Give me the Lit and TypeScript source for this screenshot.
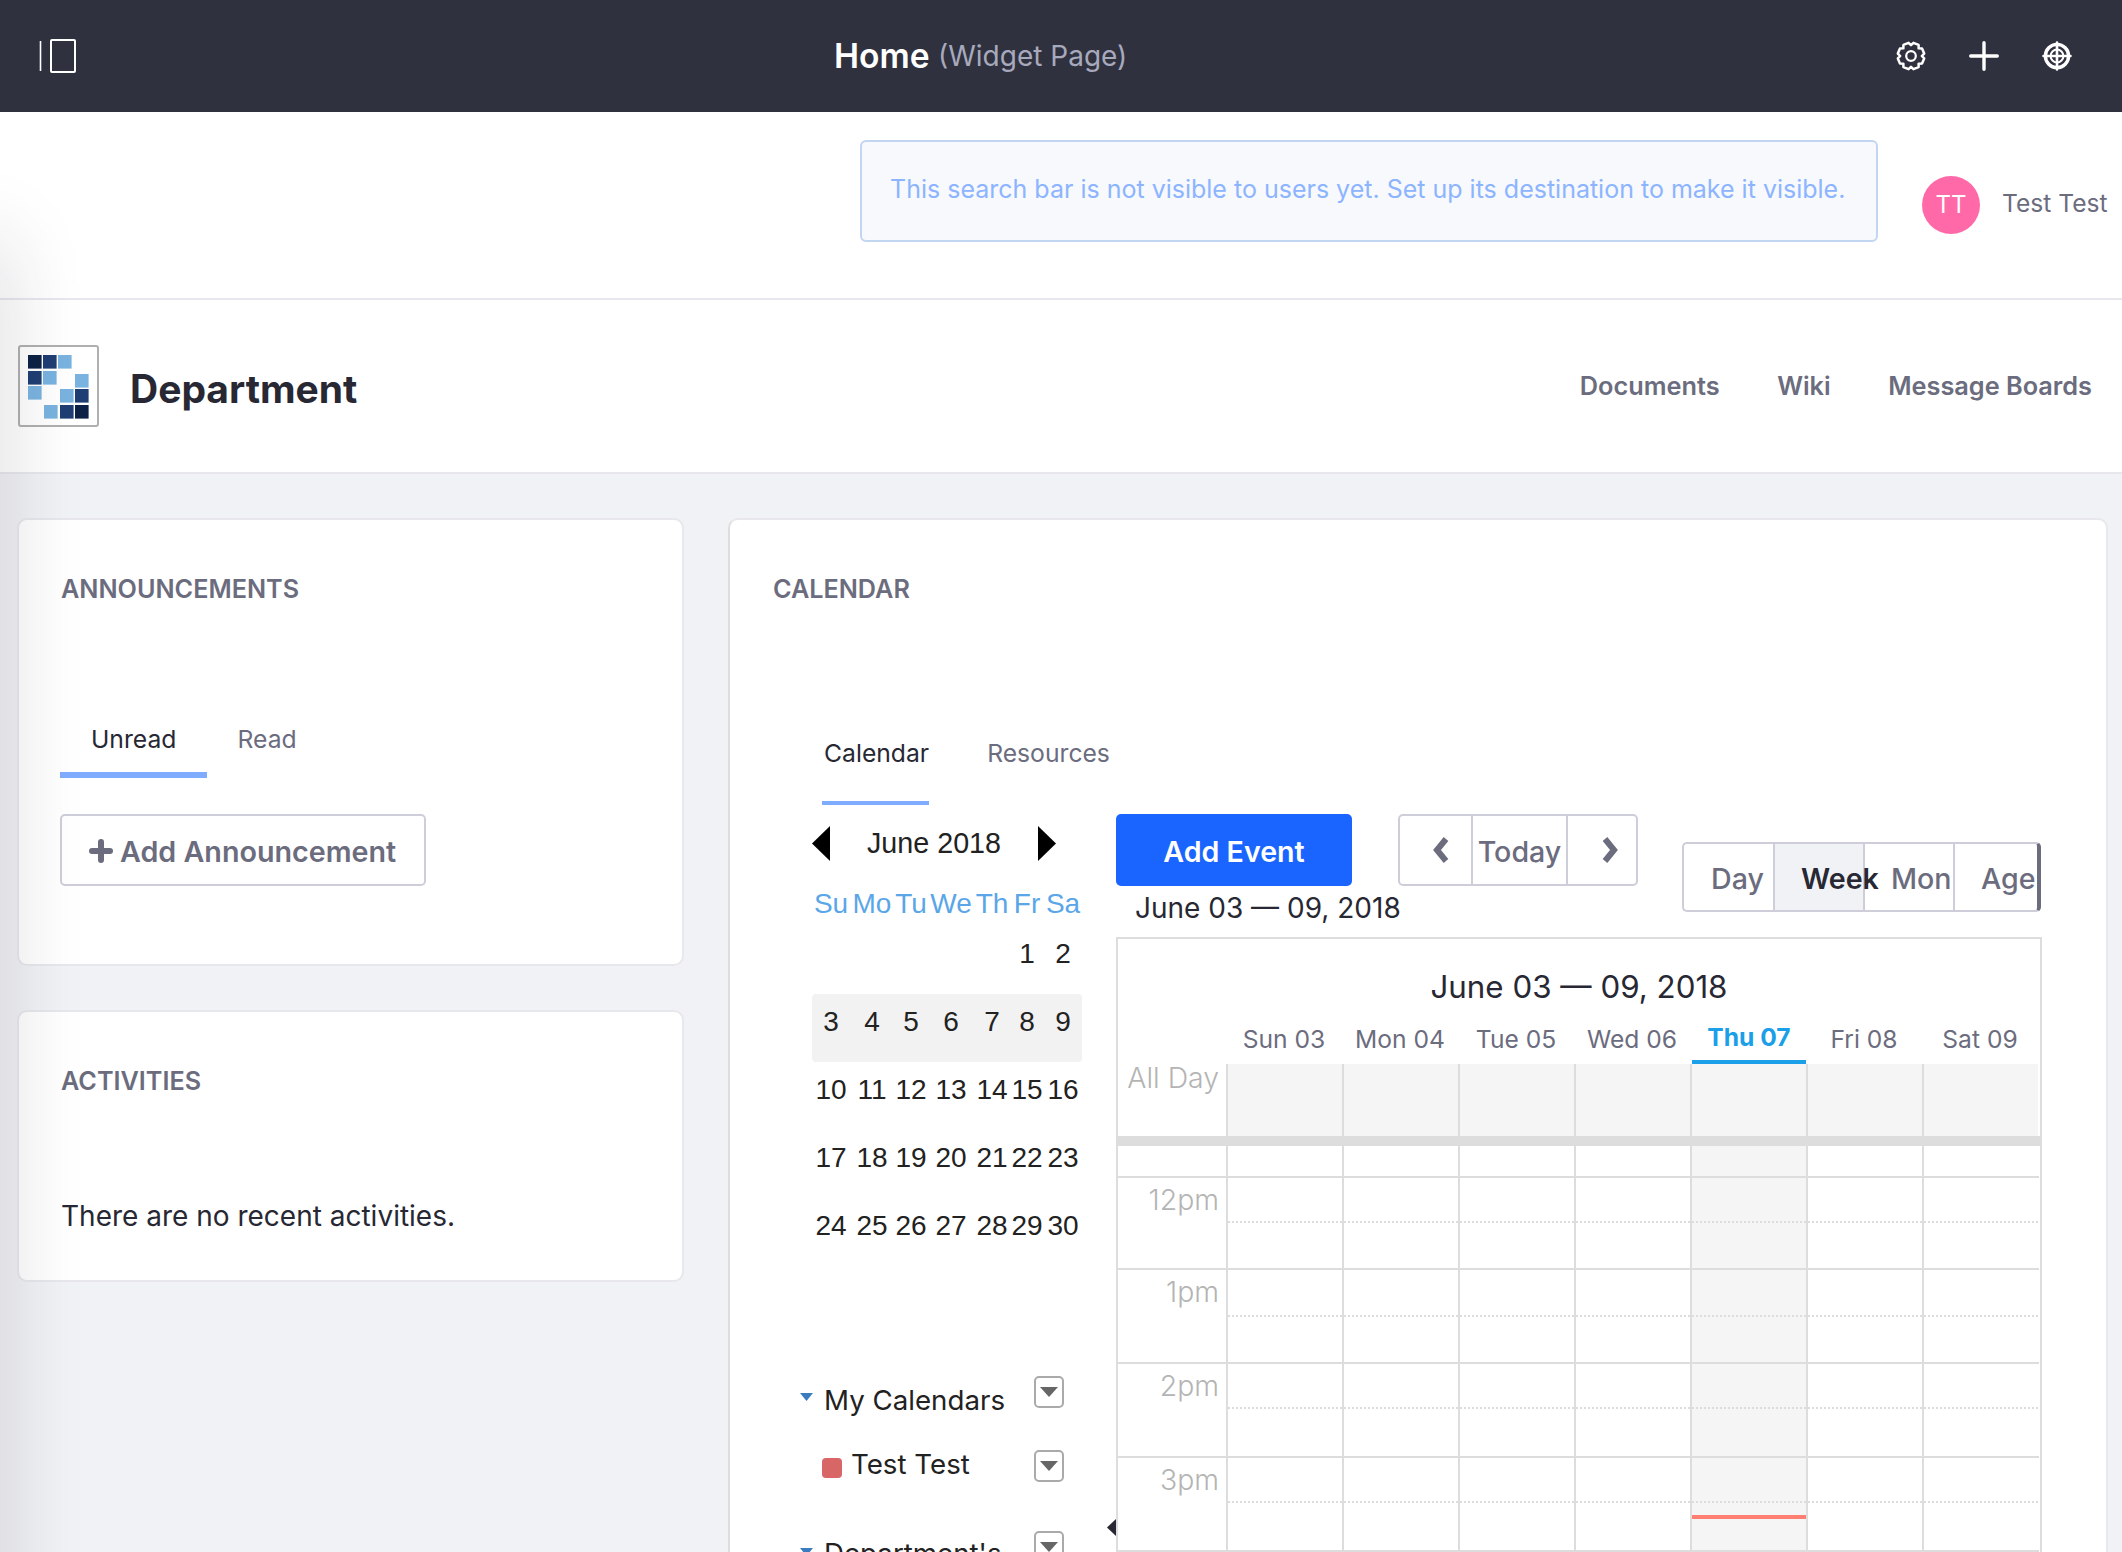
import { LitElement, html, css, svg } from "lit";
import { customElement } from "lit/decorators.js";

const gearPath = (() => {
  const pts: string[] = [];
  const c = 15;
  for (let i = 0; i < 8; i++) {
    const a = (i * 45 + 22.5) * Math.PI / 180;
    const d = 12 * Math.PI / 180;
    const e = 22.5 * Math.PI / 180;
    const p = (ang: number, r: number) => `${(c + r * Math.cos(ang)).toFixed(2)} ${(c + r * Math.sin(ang)).toFixed(2)}`;
    pts.push(p(a - d, 13.4), p(a + d, 13.4), p(a + e, 10.8));
  }
  return "M" + pts.join("L") + "Z";
})();

const LOGO: [number, number, string][] = [
  [10, 10, "#0c2146"], [25, 10, "#1f3e73"], [40, 10, "#7ab3e0"],
  [10, 26, "#1f3e73"], [25, 26, "#7ab3e0"], [57, 29, "#7ab3e0"],
  [10, 41, "#7ab3e0"], [42, 44, "#7ab3e0"], [57, 44, "#1f3e73"],
  [26, 60, "#7ab3e0"], [42, 60, "#1f3e73"], [57, 60, "#0c2146"],
];

const WEEKS = [
  ["", "", "", "", "", "1", "2"],
  ["3", "4", "5", "6", "7", "8", "9"],
  ["10", "11", "12", "13", "14", "15", "16"],
  ["17", "18", "19", "20", "21", "22", "23"],
  ["24", "25", "26", "27", "28", "29", "30"],
];
const DAYS = ["Sun 03", "Mon 04", "Tue 05", "Wed 06", "Thu 07", "Fri 08", "Sat 09"];
const HOURS = [
  { label: "12pm", h: 92, half: 45 },
  { label: "1pm", h: 94, half: 47 },
  { label: "2pm", h: 94, half: 45 },
  { label: "3pm", h: 94, half: 45 },
];

@customElement("app-root")
export class AppRoot extends LitElement {
  static styles = css`
    :host { display: block; height: 100vh; overflow: hidden; position: relative; background: #f1f2f5;
      font-family: Inter, "Liberation Sans", sans-serif; color: #272833; font-size: 24px; }
    * { box-sizing: border-box; }
    .edge { position: absolute; left: -40px; top: 240px; width: 40px; height: 1600px; box-shadow: 0 0 80px rgba(30,30,50,.22); pointer-events: none; z-index: 5; }
    .topbar { height: 112px; background: #30313f; display: flex; align-items: center; padding: 0 50px 0 39px; }
    .toggle { display: block; width: 37px; height: 34px; }
    .title { margin: -2px 0 0 758px; color: #fff; font-weight: 600; font-size: 33.6px; white-space: nowrap; }
    .title span { color: #a7a9bc; font-weight: 400; font-size: 28px; margin-left: 0; vertical-align: 2px; }
    .tools { margin-left: auto; display: flex; align-items: center; gap: 43px; }
    .tools svg { display: block; width: 30px; height: 30px; }
    .searchband { height: 188px; background: #fff; border-bottom: 2px solid #e7e7ed; display: flex; padding: 28px 0 0 860px; }
    .searchbox { width: 1018px; height: 102px; background: #f7f9fd; border: 2px solid #c2d5f1; border-radius: 6px; display: flex; align-items: center; padding: 0 0 4px 28px; color: #8db4ff; font-size: 25px; white-space: nowrap; }
    .user { margin-left: 44px; margin-top: 36px; height: 58px; display: flex; align-items: center; gap: 22px; color: #6b6c7e; font-size: 24.6px; white-space: nowrap; }
    .user .nm { margin-top: -4px; }
    .avatar { width: 58px; height: 58px; border-radius: 50%; background: #ff69a8; color: #fff; display: flex; align-items: center; justify-content: center; font-size: 24px; padding-bottom: 2px; }
    .siteband { height: 174px; background: #fff; border-bottom: 2px solid #e7e7ed; display: flex; align-items: center; padding: 0 30px 0 18px; }
    .logo { display: block; width: 81px; height: 82px; }
    .sitename { margin: 4px 0 0 31px; font-size: 39px; font-weight: 700; color: #272833; white-space: nowrap; }
    .sitenav { margin: -2px 0 0 auto; display: flex; gap: 57.6px; font-weight: 600; color: #6b6c7e; font-size: 25.3px; }
    .main { display: grid; grid-template-columns: 667px 1380px; column-gap: 44px; padding: 44px 14px 0 17px; align-items: start; }
    .leftcol { display: flex; flex-direction: column; gap: 44px; }
    .card { background: #fff; border: 2px solid #e7e7ed; border-radius: 10px; padding: 52px 0 0 42px; }
    .card.a { height: 448px; }
    .card.b { height: 272px; }
    .card.c { height: 1100px; padding-left: 43px; }
    .ctitle { font-size: 25.2px; font-weight: 600; color: #6b6c7e; line-height: 34px; white-space: nowrap; }
    .tabs { display: flex; }
    .tabs.ann { margin: 116px 0 0 -1px; }
    .tab { line-height: 34px; padding: 0 31px 16px; border-bottom: 6px solid transparent; color: #6b6c7e; font-size: 24.7px; }
    .tab + .tab { padding-left: 30px; }
    .tab.on { color: #272833; border-bottom-color: #80acff; }
    .addann { margin: 36px 0 0 -1px; width: 366px; height: 72px; border: 2px solid #cdced9; border-radius: 5px; display: flex; align-items: center; padding: 2px 0 0 27px; gap: 7px; color: #6b6c7e; font-weight: 600; font-size: 28.7px; white-space: nowrap; }
    .addann svg { width: 24px; height: 24px; display: block; }
    .none { margin-top: 101px; line-height: 34px; font-size: 28px; white-space: nowrap; color: #272833; }
    .tabs.cal { margin: 130px 0 0 49px; }
    .tabs.cal .tab { padding: 0 0 31px 2px; border-bottom-width: 4px; margin-right: 56px; }
    .body { display: flex; margin: 9px 0 0 39px; align-items: flex-start; }
    .mini { width: 304px; flex: none; font-family: "Liberation Sans", Arial, sans-serif; }
    .mhead { width: 244px; height: 58px; display: flex; align-items: center; justify-content: space-between; }
    .mhead svg { width: 18px; height: 35px; display: block; }
    .mhead span { font-size: 28.7px; color: #222; white-space: nowrap; }
    .mgrid { display: grid; grid-template-columns: 38px 44px 34px 46px 36px 34px 38px; width: 270px; grid-auto-rows: 68px; }
    .mgrid div { text-align: center; font-size: 28px; line-height: 56px; color: #222; white-space: nowrap; display: flex; justify-content: center; }
    .mgrid .h { height: 54px; line-height: 64px; color: #5aa6e8; font-size: 28px; }
    .mgrid .sel { background: #f2f2f2; }
    .mgrid .sel.first { border-radius: 4px 0 0 4px; }
    .mgrid .sel.last { border-radius: 0 4px 4px 0; }
    .mgrid.dayrow { grid-auto-rows: 54px; }
    .cals { margin: 110px 0 0 -12px; width: 264px; font-family: Inter, "Liberation Sans", sans-serif; }
    .calrow { display: flex; align-items: flex-start; height: 74px; position: relative; }
    .calrow.two { height: 81px; }
    .calrow .tx { font-size: 27.7px; line-height: 36px; margin-top: 6px; white-space: nowrap; color: #222; }
    .calrow.two .tx { margin-top: -4px; }
    .calrow.three .tx { margin-top: 4px; }
    .tri { margin: 17px 11px 0 0; width: 13px; height: 8px; flex: none; display: block; }
    .swatch { width: 20px; height: 20px; border-radius: 4px; background: #d96666; flex: none; margin: 8px 9px 0 22px; }
    .dd { margin-left: auto; width: 30px; height: 32px; border: 2px solid #aaa; border-radius: 5px; display: flex; align-items: center; justify-content: center; flex: none; background: #fff; }
    .dd svg { width: 18px; height: 10px; display: block; }
    .right { width: 926px; flex: none; position: relative; }
    .marker { position: absolute; left: -9px; top: 705px; width: 9px; height: 17px; display: block; }
    .toolbar { display: flex; height: 123px; align-items: flex-start; }
    .stack { width: 566px; flex: none; }
    .btnrow { display: flex; align-items: flex-start; gap: 46px; }
    .addev { width: 236px; height: 72px; background: #1a65ff; color: #fff; border-radius: 5px; display: flex; align-items: center; justify-content: center; font-weight: 600; font-size: 28.6px; white-space: nowrap; padding-top: 3px; }
    .group { display: flex; border: 2px solid #cdced9; border-radius: 5px; color: #6b6c7e; font-size: 28.6px; font-weight: 500; }
    .nav { height: 72px; width: 240px; }
    .nav div { display: flex; align-items: center; justify-content: center; }
    .nav .p { width: 71px; padding-left: 10px; }
    .nav .p svg { width: 20px; height: 28px; display: block; }
    .nav .t { width: 97px; border-left: 2px solid #cdced9; border-right: 2px solid #cdced9; padding-top: 2px; }
    .nav .n { flex: 1; padding-left: 15px; }
    .date { margin: 5px 0 0 19px; line-height: 34px; font-size: 28px; white-space: nowrap; color: #272833; }
    .views { margin-top: 28px; width: 359px; height: 70px; border-right-color: #6b6c7e; border-right-width: 4px; }
    .views div { width: 90px; flex: none; padding: 2px 0 0 26px; display: flex; align-items: center; white-space: nowrap; border-left: 2px solid #cdced9; }
    .views div:first-child { border-left: 0; width: 89px; padding-left: 27px; }
    .views .on { background: #f1f2f5; color: #272833; font-weight: 600; position: relative; z-index: 1; }
    .views .ag { width: 86px; overflow: hidden; }
    .box { border: 2px solid #ddd; border-bottom: 0; width: 926px; }
    .boxtitle { padding-top: 28px; line-height: 40px; font-size: 31.3px; text-align: center; color: #272833; white-space: nowrap; }
    .row { display: grid; grid-template-columns: 108px repeat(7, 116px); }
    .dh { height: 57px; padding-top: 15px; line-height: 34px; text-align: center; color: #6b6c7e; font-size: 24.6px; white-space: nowrap; }
    .dh.on { color: #1a9fe8; font-weight: 700; padding-top: 13px; border-bottom: 4px solid #1a9fe8; margin-left: 2px; }
    .lab { text-align: right; padding-right: 7px; color: #b4b4b4; font-size: 28.4px; font-weight: 300; white-space: nowrap; }
    .allday { height: 72px; }
    .allday .lab { line-height: 28px; }
    .allday .c { background: #f5f5f5; border-left: 2px solid #ddd; }
    .bar { height: 10px; background: #ddd; margin-right: -2px; }
    .c { border-left: 2px solid #ddd; }
    .c.on { background: #f5f5f5; }
    .r0 { height: 32px; border-bottom: 2px solid #ddd; margin-right: 1px; }
    .hr { border-bottom: 2px solid #ddd; margin-right: 1px; }
    .hr .lab { line-height: 44px; }
    .top { border-bottom: 2px dotted #ddd; }
    .now { margin-top: 12px; height: 4px; background: #ff8073; }
  `;

  private cog() {
    return html`<svg viewBox="0 0 30 30" fill="none" stroke="#fff"><path d=${gearPath} stroke-width="2.5" stroke-linejoin="round"></path><circle cx="15" cy="15" r="4.8" stroke-width="2.2"></circle></svg>`;
  }
  private plus() {
    return html`<svg viewBox="0 0 30 30" stroke="#fff" stroke-width="3.4" stroke-linecap="round"><path d="M15 1.7V28.3M1.7 15H28.3"></path></svg>`;
  }
  private target() {
    return html`<svg viewBox="0 0 30 30" fill="none" stroke="#fff"><circle cx="15" cy="15" r="11.6" stroke-width="3.4"></circle><circle cx="15" cy="15" r="6.4" stroke-width="2"></circle><path d="M15 1.5V28.5M1.5 15H28.5" stroke-width="2.6" stroke-linecap="round"></path></svg>`;
  }
  private dd() {
    return html`<span class="dd"><svg viewBox="0 0 18 10"><path d="M0 0H18L9 10Z" fill="#666"></path></svg></span>`;
  }
  private tri() {
    return html`<svg class="tri" viewBox="0 0 13 8"><path d="M0 0H13L6.5 8Z" fill="#3a7cbf"></path></svg>`;
  }

  render() {
    return html`
      <div class="edge"></div>
      <div class="topbar">
        <svg class="toggle" viewBox="0 0 37 34" fill="none" stroke="#fff"><path d="M1.5 2V32" stroke-width="1.6"></path><rect x="12" y="1" width="24" height="32" rx="1" stroke-width="2"></rect></svg>
        <div class="title">Home <span>(Widget Page)</span></div>
        <div class="tools">${this.cog()}${this.plus()}${this.target()}</div>
      </div>
      <div class="searchband">
        <div class="searchbox">This search bar is not visible to users yet. Set up its destination to make it visible.</div>
        <div class="user"><div class="avatar">TT</div><span class="nm">Test Test</span></div>
      </div>
      <div class="siteband">
        <svg class="logo" viewBox="0 0 81 82">
          <rect x="1" y="1" width="79" height="80" rx="2" fill="#fff" stroke="#b0b0b0" stroke-width="2"></rect>
          ${LOGO.map(([x, y, f]) => svg`<rect x=${x} y=${y} width="13.6" height="13.6" fill=${f}></rect>`)}
        </svg>
        <div class="sitename">Department</div>
        <div class="sitenav"><span>Documents</span><span>Wiki</span><span>Message Boards</span></div>
      </div>
      <div class="main">
        <div class="leftcol">
          <div class="card a">
            <div class="ctitle">ANNOUNCEMENTS</div>
            <div class="tabs ann"><div class="tab on">Unread</div><div class="tab">Read</div></div>
            <div class="addann"><svg viewBox="0 0 24 24" stroke="#6b6c7e" stroke-width="6" stroke-linecap="round"><path d="M12 3V21M3 12H21"></path></svg>Add Announcement</div>
          </div>
          <div class="card b">
            <div class="ctitle">ACTIVITIES</div>
            <div class="none">There are no recent activities.</div>
          </div>
        </div>
        <div class="card c">
          <div class="ctitle">CALENDAR</div>
          <div class="tabs cal"><div class="tab on">Calendar</div><div class="tab">Resources</div></div>
          <div class="body">
            <div class="mini">
              <div class="mhead">
                <svg viewBox="0 0 18 35"><path d="M18 0V35L0 17.5Z" fill="#000"></path></svg>
                <span>June 2018</span>
                <svg viewBox="0 0 18 35"><path d="M0 0V35L18 17.5Z" fill="#000"></path></svg>
              </div>
              <div class="mgrid dayrow">${["Su", "Mo", "Tu", "We", "Th", "Fr", "Sa"].map((d) => html`<div class="h">${d}</div>`)}</div>
              <div class="mgrid">
                ${WEEKS.map((w, wi) => w.map((d, di) => html`<div class="${wi === 1 ? "sel" : ""} ${di === 0 ? "first" : ""} ${di === 6 ? "last" : ""}">${d}</div>`))}
              </div>
              <div class="cals">
                <div class="calrow">${this.tri()}<span class="tx">My Calendars</span>${this.dd()}</div>
                <div class="calrow two"><span class="swatch"></span><span class="tx">Test Test</span>${this.dd()}</div>
                <div class="calrow three">${this.tri()}<span class="tx">Department's</span>${this.dd()}</div>
              </div>
            </div>
            <div class="right">
              <svg class="marker" viewBox="0 0 9 17"><path d="M9 0V17L0 8.5Z" fill="#272833"></path></svg>
              <div class="toolbar">
                <div class="stack">
                  <div class="btnrow">
                    <div class="addev">Add Event</div>
                    <div class="group nav">
                      <div class="p"><svg viewBox="0 0 20 28" fill="none" stroke="#6b6c7e" stroke-width="6"><path d="M15 3L6 14L15 25"></path></svg></div>
                      <div class="t">Today</div>
                      <div class="n p"><svg viewBox="0 0 20 28" fill="none" stroke="#6b6c7e" stroke-width="6"><path d="M5 3L14 14L5 25"></path></svg></div>
                    </div>
                  </div>
                  <div class="date">June 03 — 09, 2018</div>
                </div>
                <div class="group views"><div>Day</div><div class="on">Week</div><div>Mon</div><div class="ag">Age</div></div>
              </div>
              <div class="box">
                <div class="boxtitle">June 03 — 09, 2018</div>
                <div class="row"><div></div>${DAYS.map((d, i) => html`<div class="dh ${i === 4 ? "on" : ""}">${d}</div>`)}</div>
                <div class="row allday"><div class="lab">All Day</div>${DAYS.map(() => html`<div class="c"></div>`)}</div>
                <div class="bar"></div>
                <div class="row r0"><div></div>${DAYS.map((_, i) => html`<div class="c ${i === 4 ? "on" : ""}"></div>`)}</div>
                ${HOURS.map((h, hi) => html`
                  <div class="row hr" style="height:${h.h}px">
                    <div class="lab">${h.label}</div>
                    ${DAYS.map((_, i) => html`<div class="c ${i === 4 ? "on" : ""}"><div class="top" style="height:${h.half}px"></div>${i === 4 && hi === 3 ? html`<div class="now"></div>` : ""}</div>`)}
                  </div>`)}
              </div>
            </div>
          </div>
        </div>
      </div>
    `;
  }
}
